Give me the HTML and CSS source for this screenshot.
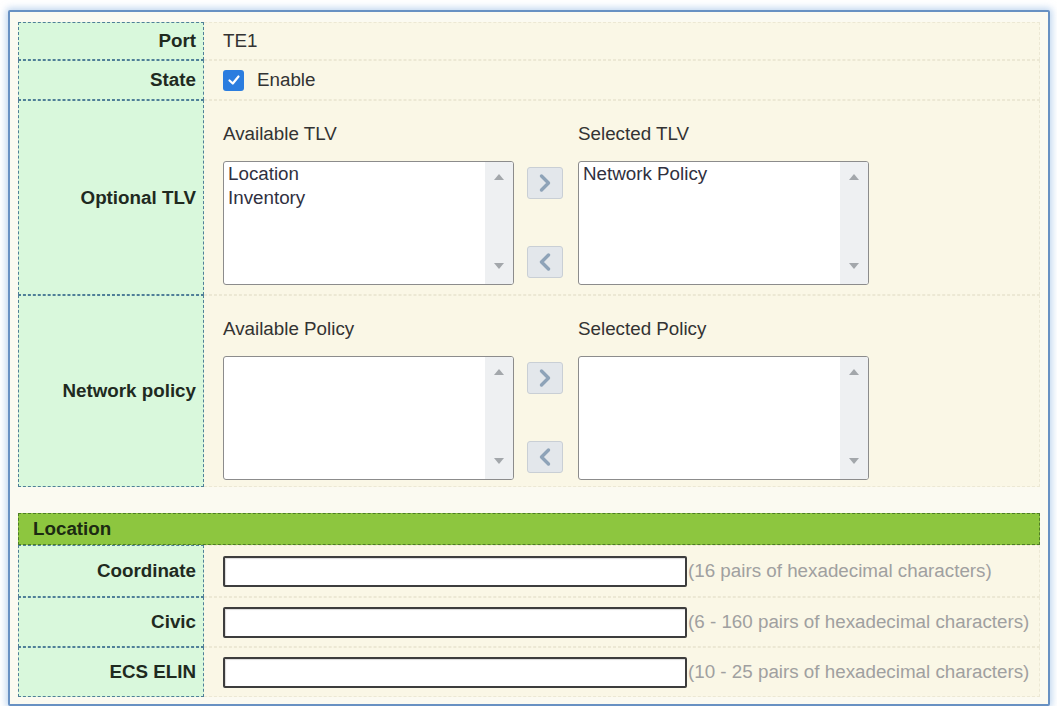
FILE: index.html
```html
<!DOCTYPE html>
<html>
<head>
<meta charset="utf-8">
<link rel="stylesheet" href="styles.css">
</head>
<body>
<div class="frame">
  <div class="grid">
    <div class="lbl h-port">Port</div>
    <div class="val h-port">TE1</div>

    <div class="lbl h-state">State</div>
    <div class="val h-state">
      <span class="cb"><svg width="14" height="14" viewBox="0 0 14 14"><polyline points="2.5,7.5 5.8,10.5 11.5,3.5" fill="none" stroke="#fff" stroke-width="2.2" stroke-linecap="round" stroke-linejoin="round"/></svg></span>
      <span class="cb-text">Enable</span>
    </div>

    <div class="lbl h-tlv">Optional TLV</div>
    <div class="val h-tlv top">
      <div class="dual">
        <div class="col">
          <div class="cap">Available TLV</div>
          <div class="listbox">
            <div class="items"><div>Location</div><div>Inventory</div></div>
            <div class="sb">
              <svg width="10" height="6" viewBox="0 0 10 6"><polygon points="5,0 10,6 0,6" fill="#a3a7ab"/></svg>
              <svg width="10" height="6" viewBox="0 0 10 6"><polygon points="0,0 10,0 5,6" fill="#a3a7ab"/></svg>
            </div>
          </div>
        </div>
        <div class="btns">
          <div class="mv"><svg width="14" height="20" viewBox="0 0 14 20"><polyline points="3.5,3 10.5,10 3.5,17" fill="none" stroke="#8ea3b8" stroke-width="3.4" stroke-linejoin="round" stroke-linecap="round"/></svg></div>
          <div class="mv"><svg width="14" height="20" viewBox="0 0 14 20"><polyline points="10.5,3 3.5,10 10.5,17" fill="none" stroke="#8ea3b8" stroke-width="3.4" stroke-linejoin="round" stroke-linecap="round"/></svg></div>
        </div>
        <div class="col">
          <div class="cap">Selected TLV</div>
          <div class="listbox">
            <div class="items"><div>Network Policy</div></div>
            <div class="sb">
              <svg width="10" height="6" viewBox="0 0 10 6"><polygon points="5,0 10,6 0,6" fill="#a3a7ab"/></svg>
              <svg width="10" height="6" viewBox="0 0 10 6"><polygon points="0,0 10,0 5,6" fill="#a3a7ab"/></svg>
            </div>
          </div>
        </div>
      </div>
    </div>

    <div class="lbl h-pol">Network policy</div>
    <div class="val h-pol top">
      <div class="dual">
        <div class="col">
          <div class="cap">Available Policy</div>
          <div class="listbox">
            <div class="items"></div>
            <div class="sb">
              <svg width="10" height="6" viewBox="0 0 10 6"><polygon points="5,0 10,6 0,6" fill="#a3a7ab"/></svg>
              <svg width="10" height="6" viewBox="0 0 10 6"><polygon points="0,0 10,0 5,6" fill="#a3a7ab"/></svg>
            </div>
          </div>
        </div>
        <div class="btns">
          <div class="mv"><svg width="14" height="20" viewBox="0 0 14 20"><polyline points="3.5,3 10.5,10 3.5,17" fill="none" stroke="#8ea3b8" stroke-width="3.4" stroke-linejoin="round" stroke-linecap="round"/></svg></div>
          <div class="mv"><svg width="14" height="20" viewBox="0 0 14 20"><polyline points="10.5,3 3.5,10 10.5,17" fill="none" stroke="#8ea3b8" stroke-width="3.4" stroke-linejoin="round" stroke-linecap="round"/></svg></div>
        </div>
        <div class="col">
          <div class="cap">Selected Policy</div>
          <div class="listbox">
            <div class="items"></div>
            <div class="sb">
              <svg width="10" height="6" viewBox="0 0 10 6"><polygon points="5,0 10,6 0,6" fill="#a3a7ab"/></svg>
              <svg width="10" height="6" viewBox="0 0 10 6"><polygon points="0,0 10,0 5,6" fill="#a3a7ab"/></svg>
            </div>
          </div>
        </div>
      </div>
    </div>
  </div>

  <div class="spacer"></div>

  <div class="section-head">Location</div>

  <div class="grid">
    <div class="lbl h-coord">Coordinate</div>
    <div class="val h-coord"><div class="inp"></div><span class="hint">(16 pairs of hexadecimal characters)</span></div>

    <div class="lbl h-row">Civic</div>
    <div class="val h-row"><div class="inp"></div><span class="hint">(6 - 160 pairs of hexadecimal characters)</span></div>

    <div class="lbl h-row">ECS ELIN</div>
    <div class="val h-row"><div class="inp"></div><span class="hint">(10 - 25 pairs of hexadecimal characters)</span></div>
  </div>
</div>
</body>
</html>
```

FILE: styles.css
```css
* { box-sizing: border-box; }

html, body {
  margin: 0;
  padding: 0;
  background: #ffffff;
}

body {
  padding: 10px 7px 0 8px;
  font-family: "Liberation Sans", Arial, sans-serif;
  font-size: 18.8px;
  color: #333333;
}

.frame {
  width: 1042px;
  height: 696px;
  border: 2px solid #6891c3;
  border-radius: 2px;
  background: #fbfaf1;
  box-shadow: 0 0 7px 2px rgba(140, 180, 225, 0.55);
  padding: 10px 8px 7px 8px;
}

.grid {
  display: grid;
  grid-template-columns: 186px 1fr;
}

.lbl {
  background: #d9f8dc;
  border: 1.5px dashed #4f7f98;
  font-weight: bold;
  color: #1f2a1f;
  display: flex;
  align-items: center;
  justify-content: flex-end;
  padding-right: 7px;
}

.val {
  background: #faf7e6;
  border: 1px dashed #ece8d4;
  border-left: none;
  display: flex;
  align-items: center;
  padding-left: 19px;
}

.val.top {
  align-items: flex-start;
  padding-top: 22px;
}

.h-port { height: 38px; }
.h-state { height: 40px; }
.h-tlv { height: 195px; }
.h-pol { height: 192px; }
.h-coord { height: 52px; }
.h-row { height: 50px; }

.cb {
  width: 21px;
  height: 21px;
  border-radius: 3px;
  background: #2b7ddf;
  display: flex;
  align-items: center;
  justify-content: center;
}

.cb-text {
  margin-left: 13px;
}

.dual {
  display: flex;
  align-items: flex-end;
}

.col {
  display: flex;
  flex-direction: column;
}

.cap {
  line-height: 22px;
  height: 22px;
  margin-bottom: 16px;
}

.listbox {
  width: 291px;
  height: 124px;
  border: 1px solid #8c8c8c;
  border-radius: 3px;
  background: #ffffff;
  display: flex;
  overflow: hidden;
}

.items {
  flex: 1;
  padding: 0 4px;
  line-height: 24px;
  color: #303040;
}

.sb {
  width: 28px;
  background: #eef0f2;
  display: flex;
  flex-direction: column;
  align-items: center;
  justify-content: space-between;
  padding: 12px 0 15px;
}

.btns {
  width: 64px;
  height: 124px;
  display: flex;
  flex-direction: column;
  justify-content: space-between;
  padding: 6px 0 7px 13px;
}

.mv {
  width: 36px;
  height: 32px;
  border: 1px solid #c9cfd5;
  border-radius: 3px;
  background: #e3e7eb;
  display: flex;
  align-items: center;
  justify-content: center;
}

.spacer {
  height: 26px;
}

.section-head {
  height: 32px;
  background: #8dc63f;
  border: 1.5px dashed #4e7d26;
  font-weight: bold;
  color: #1c2a12;
  display: flex;
  align-items: center;
  padding-left: 14px;
}

.inp {
  width: 464px;
  height: 31px;
  border: 2px solid #3d3d3d;
  border-radius: 2px;
  background: #ffffff;
  box-shadow: inset 1px 1px 1px rgba(0,0,0,0.15);
}

.hint {
  margin-left: 1px;
  color: #a0a0a0;
}
```
